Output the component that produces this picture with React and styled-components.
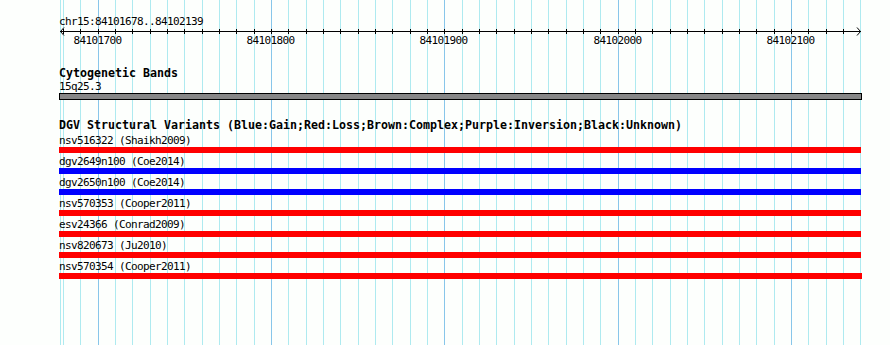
import React from "react";
import styled, { createGlobalStyle } from "styled-components";

const GlobalStyle = createGlobalStyle`
  html, body {
    margin: 0;
    padding: 0;
    background: #fdfffd;
  }
`;

// view geometry
const VIEW_LEFT = 59;
const VIEW_WIDTH = 803;
const bpToX = (bp) => Math.floor(98.2 + (bp - 84101700) * 1.73333);

const gridLines = [];
for (let bp = 84101680; bp <= 84102140; bp += 10) {
  gridLines.push({ bp, x: bpToX(bp), major: bp % 100 === 0 });
}

const MINOR = "#aeeaf0";
const MAJOR = "#88c6ea";

const gridBackground = (() => {
  const stops = ["transparent 0px"];
  const lines = [{ x: 60, major: false }, ...gridLines];
  lines.forEach(({ x, major }) => {
    const c = major ? MAJOR : MINOR;
    stops.push(`transparent ${x}px`, `${c} ${x}px`, `${c} ${x + 1}px`, `transparent ${x + 1}px`);
  });
  return `linear-gradient(to right, ${stops.join(", ")})`;
})();

const variants = [
  { name: "nsv516322 (Shaikh2009)", color: "#ff0000" },
  { name: "dgv2649n100 (Coe2014)", color: "#0000ff" },
  { name: "dgv2650n100 (Coe2014)", color: "#0000ff" },
  { name: "nsv570353 (Cooper2011)", color: "#ff0000" },
  { name: "esv24366 (Conrad2009)", color: "#ff0000" },
  { name: "nsv820673 (Ju2010)", color: "#ff0000" },
  { name: "nsv570354 (Cooper2011)", color: "#ff0000", wide: true },
];

//~~~~~~~~~~~~~~~~~~~~~~~~~~

const Page = styled.div`
  width: 890px;
  height: 345px;
  overflow: hidden;
  background-color: #fdfffd;
  background-image: ${gridBackground};
  background-repeat: no-repeat;
  font-family: "DejaVu Sans Mono", "Liberation Mono", monospace;
  color: #000;
`;

const Panel = styled.div`
  margin-left: ${VIEW_LEFT}px;
  width: ${VIEW_WIDTH}px;
  display: flex;
  flex-direction: column;
  padding-top: 15px;
`;

const SmallText = styled.div`
  font-size: 11px;
  letter-spacing: -0.62px;
  line-height: 13px;
  height: 13px;
  white-space: pre;
`;

const TrackTitle = styled.div`
  font-size: 11.63px;
  font-weight: bold;
  line-height: 13px;
  height: 13px;
  white-space: pre;
  margin-top: 19px;
`;

const RulerSvg = styled.svg`
  display: block;
  width: ${VIEW_WIDTH}px;
  height: 20px;
  overflow: visible;
`;

const TickLabel = styled.text`
  font-family: "DejaVu Sans Mono", "Liberation Mono", monospace;
  font-size: 11px;
  letter-spacing: -0.62px;
  fill: #000;
`;

const BandBar = styled.div`
  width: ${VIEW_WIDTH - 2}px;
  height: 5px;
  border: 1px solid #000;
  background: #878787;
`;

const VariantList = styled.div`
  display: flex;
  flex-direction: column;
  margin-top: 2px;
`;

const VariantRow = styled.div`
  display: flex;
  flex-direction: column;
  margin-bottom: 2px;
`;

const VariantBar = styled.div`
  height: 6px;
  width: ${(p) => (p.$wide ? VIEW_WIDTH : VIEW_WIDTH - 1)}px;
  background: ${(p) => p.$color};
`;

//~~~~~~~~~~~~~~~~~~~~~~~~~~

function Ruler() {
  const end = VIEW_WIDTH - 1;
  return (
    <RulerSvg viewBox={`0 0 ${VIEW_WIDTH} 20`} shapeRendering="crispEdges">
      <rect x="1" y="3" width={end - 1} height="1" fill="#000" />
      <polyline points="5,-0.5 1.5,3.5 5,7.5" fill="none" stroke="#000" strokeWidth="1" shapeRendering="auto" />
      <polyline
        points={`${end - 4},-0.5 ${end - 0.5},3.5 ${end - 4},7.5`}
        fill="none"
        stroke="#000"
        strokeWidth="1"
        shapeRendering="auto"
      />
      {gridLines
        .filter((g) => g.bp < 84102140)
        .map((g) => (
          <rect key={g.bp} x={g.x - VIEW_LEFT} y="1" width="1" height="5" fill="#000" />
        ))}
      {gridLines
        .filter((g) => g.major)
        .map((g) => (
          <TickLabel key={g.bp} x={g.x - VIEW_LEFT - 24.5} y="16">
            {g.bp}
          </TickLabel>
        ))}
    </RulerSvg>
  );
}

export default function App() {
  return (
    <Page>
      <GlobalStyle />
      <Panel>
        <SmallText>chr15:84101678..84102139</SmallText>
        <Ruler />

        <TrackTitle>Cytogenetic Bands</TrackTitle>
        <SmallText>15q25.3</SmallText>
        <BandBar />

        <TrackTitle>
          DGV Structural Variants (Blue:Gain;Red:Loss;Brown:Complex;Purple:Inversion;Black:Unknown)
        </TrackTitle>
        <VariantList>
          {variants.map((v) => (
            <VariantRow key={v.name}>
              <SmallText>{v.name}</SmallText>
              <VariantBar $color={v.color} $wide={v.wide} />
            </VariantRow>
          ))}
        </VariantList>
      </Panel>
    </Page>
  );
}
